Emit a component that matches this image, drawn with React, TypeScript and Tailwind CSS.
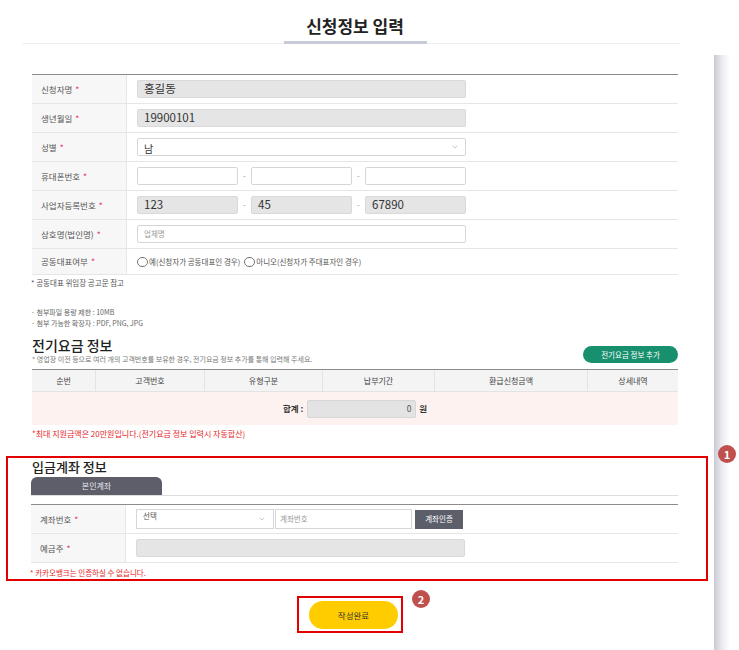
import { ChevronDown } from "lucide-react";

// 신청정보 입력 화면 (입금계좌 영역 강조 표시 포함)

const FONT = "font-['Noto_Sans_CJK_KR','Noto_Sans',sans-serif]";

function Req() {
  return <span className="text-[#e8336b] ml-[3px]">*</span>;
}

function Row({ label, last, children }: { label: string; last?: boolean; children: React.ReactNode }) {
  return (
    <div className={`flex border-b border-[#e6e6e6] ${last ? "h-[26px]" : "h-[29px]"}`}>
      <div className="w-[95px] shrink-0 bg-[#f7f7f7] border-r border-[#e6e6e6] flex items-center pl-[9px] text-[8.5px] text-[#555]">
        {label}
        <Req />
      </div>
      <div className="flex-1 flex items-center pl-[10px]">{children}</div>
    </div>
  );
}

function Box({ w, value, gray, placeholder }: { w: string; value?: string; gray?: boolean; placeholder?: string }) {
  return (
    <div
      className={`${w} h-[18px] rounded-[2px] border flex items-center pl-[6px] ${
        gray ? "bg-[#e5e5e5] border-[#d9d9d9]" : "bg-white border-[#d6d6d6]"
      }`}
    >
      {value && <span className="text-[11.5px] text-[#333] leading-none">{value}</span>}
      {placeholder && <span className="text-[7.5px] text-[#999] leading-none">{placeholder}</span>}
    </div>
  );
}

function Dash() {
  return <span className="w-[13px] text-center text-[8px] text-[#999]">-</span>;
}

function Radio({ label }: { label: string }) {
  return (
    <span className="flex items-center gap-[1px] mr-[4px] text-[7.5px] text-[#555]">
      <span className="w-[11px] h-[10px] rounded-full border border-[#777]" />
      {label}
    </span>
  );
}

const BILL_COLS = [
  { w: "w-[64px]", t: "순번" },
  { w: "w-[109px]", t: "고객번호" },
  { w: "w-[118px]", t: "유형구분" },
  { w: "w-[112px]", t: "납부기간" },
  { w: "w-[153px]", t: "환급신청금액" },
  { w: "flex-1", t: "상세내역" },
];

function Badge({ n, className }: { n: string; className: string }) {
  return (
    <div
      className={`absolute w-[18px] h-[18px] rounded-full bg-[#c0504d] text-white text-[11px] font-bold flex items-center justify-center ${className}`}
    >
      {n}
    </div>
  );
}

export default function App() {
  return (
    <div className={`w-[739px] h-[650px] overflow-hidden bg-white flex ${FONT}`}>
      <div className="w-[714px] shrink-0">
        {/* 제목 */}
        <div className="ml-[22px] w-[658px] h-[44px] border-b border-[#efefef] flex justify-center items-end pl-[8px]">
          <div className="w-[143px] text-center border-b-[3px] border-[#c7ccd8] -mb-[1px] pb-[3px] text-[17px] font-bold text-[#222] leading-[24px]">
            신청정보 입력
          </div>
        </div>

        {/* 신청자 정보 */}
        <div className="ml-[32px] w-[646px] mt-[30px] border-t border-[#8c8c8c]">
          <Row label="신청자명">
            <Box w="w-[329px]" value="홍길동" gray />
          </Row>
          <Row label="생년월일">
            <Box w="w-[329px]" value="19900101" gray />
          </Row>
          <Row label="성별">
            <div className="w-[329px] h-[18px] rounded-[2px] border border-[#d6d6d6] flex items-center justify-between pl-[6px] pr-[6px]">
              <span className="text-[10px] text-[#333] leading-none mt-[3px]">남</span>
              <ChevronDown size={8} color="#aaa" />
            </div>
          </Row>
          <Row label="휴대폰번호">
            <Box w="w-[101px]" />
            <Dash />
            <Box w="w-[101px]" />
            <Dash />
            <Box w="w-[101px]" />
          </Row>
          <Row label="사업자등록번호">
            <Box w="w-[101px]" value="123" gray />
            <Dash />
            <Box w="w-[101px]" value="45" gray />
            <Dash />
            <Box w="w-[101px]" value="67890" gray />
          </Row>
          <Row label="상호명(법인명)">
            <Box w="w-[329px]" placeholder="업체명" />
          </Row>
          <Row label="공동대표여부" last>
            <Radio label="예(신청자가 공동대표인 경우)" />
            <Radio label="아니오(신청자가 주대표자인 경우)" />
          </Row>
        </div>

        <p className="ml-[31px] mt-[3px] text-[7.5px] leading-[10px] text-[#555]">* 공동대표 위임장 공고문 참고</p>

        <div className="ml-[31px] mt-[19px] text-[7px] leading-[11px] text-[#666]">
          <p>· 첨부파일 용량 제한 : 10MB</p>
          <p>· 첨부 가능한 확장자 : PDF, PNG, JPG</p>
        </div>

        {/* 전기요금 정보 */}
        <div className="ml-[32px] w-[646px] mt-[9px] flex items-end justify-between">
          <div>
            <h2 className="text-[14px] font-medium text-[#222] leading-[15px]">전기요금 정보</h2>
            <p className="mt-[2px] text-[7px] leading-[9px] text-[#777]">
              * 영업장 이전 등으로 여러 개의 고객번호를 보유한 경우, 전기요금 정보 추가를 통해 입력해 주세요.
            </p>
          </div>
          <button className="w-[95px] h-[17px] mb-[1px] rounded-full bg-[#18906e] text-white text-[7.5px]">
            전기요금 정보 추가
          </button>
        </div>

        <div className="ml-[32px] w-[646px] mt-[5px] border-t border-[#8c8c8c]">
          <div className="flex h-[22px] bg-[#f4f4f4] border-b border-[#e3e3e3]">
            {BILL_COLS.map((c, i) => (
              <div
                key={c.t}
                className={`${c.w} flex items-center justify-center text-[8px] text-[#444] ${
                  i < BILL_COLS.length - 1 ? "border-r border-[#e3e3e3]" : ""
                }`}
              >
                {c.t}
              </div>
            ))}
          </div>
          <div className="h-[33px] bg-[#fdf2ef] flex items-center pl-[251px]">
            <span className="text-[8.5px] font-bold text-[#333] mr-[4px]">합계 :</span>
            <div className="w-[109px] h-[18px] rounded-[2px] bg-[#e3e3e3] border border-[#d6d6d6] flex items-center justify-end pr-[4px] text-[8.5px] text-[#555]">
              0
            </div>
            <span className="text-[8.5px] font-bold text-[#333] ml-[3px]">원</span>
          </div>
        </div>

        <p className="ml-[32px] mt-[4px] text-[8px] leading-[10px] text-[#e8261f]">
          *최대 지원금액은 20만원입니다.(전기요금 정보 입력시 자동합산)
        </p>

        {/* 입금계좌 정보 */}
        <div className="relative ml-[6px] w-[702px] mt-[17px] border-2 border-[#e30000] pl-[23px] pt-[1px] pb-[1px]">
          <Badge n="1" className="-right-[30px] -top-[13px]" />
          <h2 className="text-[13px] font-medium text-[#222] leading-[16px] ml-[1px]">입금계좌 정보</h2>
          <div className="w-[647px] mt-[2px] border-b border-[#dedede]">
            <div className="w-[131px] h-[18px] rounded-t-[6px] bg-[#5d5e6a] text-[#e8e8ee] text-[8px] flex items-center justify-center">
              본인계좌
            </div>
          </div>
          <div className="w-[647px] mt-[8px] border-t border-[#8c8c8c]">
            <Row label="계좌번호">
              <div className="w-[138px] h-[20px] border border-[#d6d6d6] flex items-center justify-between pl-[6px] pr-[7px]">
                <span className="text-[7.5px] text-[#555] -mt-[6px]">선택</span>
                <ChevronDown size={8} color="#aaa" />
              </div>
              <div className="w-[137px] h-[20px] ml-[1px] border border-[#d6d6d6] flex items-center pl-[4px] text-[7.5px] text-[#999]">
                계좌번호
              </div>
              <button className="w-[48px] h-[19px] ml-[3px] bg-[#5c5e6a] text-white text-[7.5px]">계좌인증</button>
            </Row>
            <Row label="예금주">
              <Box w="w-[329px]" gray />
            </Row>
          </div>
          <p className="mt-[5px] -ml-[1px] text-[7.5px] leading-[10px] text-[#e8261f]">* 카카오뱅크는 인증하실 수 없습니다.</p>
        </div>

        {/* 작성완료 */}
        <div className="relative ml-[297px] mt-[15px] w-[106px] border-2 border-[#e30000] pl-[10px] pr-[3px] py-[2px]">
          <Badge n="2" className="left-[113px] -top-[8px]" />
          <button className="w-[89px] h-[28px] rounded-full bg-[#ffcc00] text-[8.5px] text-[#333]">작성완료</button>
        </div>
      </div>

      {/* 우측 스크롤 영역 */}
      <div className="w-[16px] mt-[55px] shrink-0 bg-gradient-to-r from-[#c9cad4] via-[#ececf0] to-white" />
    </div>
  );
}
